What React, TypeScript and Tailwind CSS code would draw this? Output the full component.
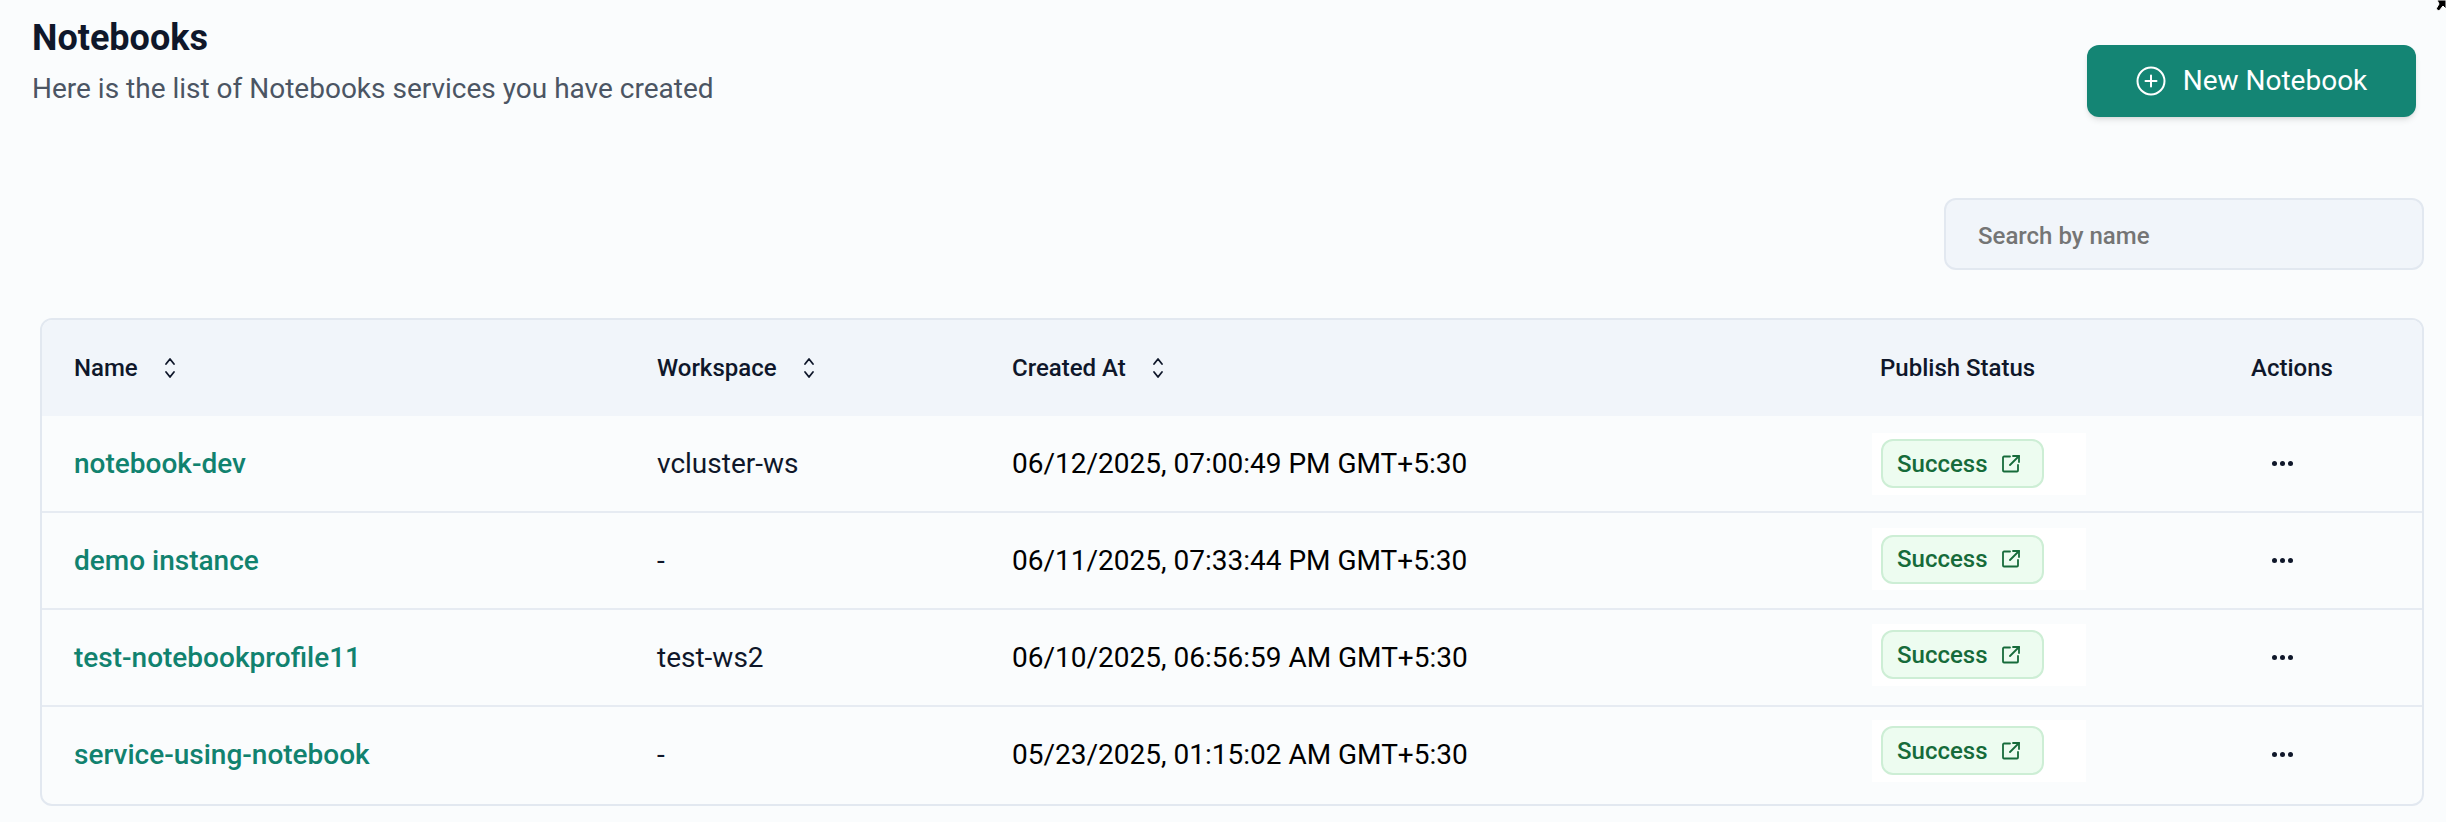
import React from 'react';

const rows = [
  { name: 'notebook-dev', workspace: 'vcluster-ws', createdAt: '06/12/2025, 07:00:49 PM GMT+5:30', badgeOffset: '' },
  { name: 'demo instance', workspace: '-', createdAt: '06/11/2025, 07:33:44 PM GMT+5:30', badgeOffset: '-mt-[3px]' },
  { name: 'test-notebookprofile11', workspace: 'test-ws2', createdAt: '06/10/2025, 06:56:59 AM GMT+5:30', badgeOffset: '-mt-[6px]' },
  { name: 'service-using-notebook', workspace: '-', createdAt: '05/23/2025, 01:15:02 AM GMT+5:30', badgeOffset: '-mt-[8px]' },
];

function SortIcon() {
  return (
    <svg className="w-[18px] h-[24px] text-[#0f172a]" viewBox="0 0 18 24" fill="none" stroke="currentColor" strokeWidth="1.8" strokeLinecap="round" strokeLinejoin="round">
      <path d="M5 8 9 3l4 5" />
      <path d="M5 16l4 5 4-5" />
    </svg>
  );
}

function ExternalIcon() {
  return (
    <svg className="w-[18px] h-[18px] text-[#166b3a]" viewBox="0 0 18 18" fill="none" stroke="currentColor" strokeWidth="1.8" strokeLinecap="round" strokeLinejoin="round">
      <path d="M8 1.5H2a1 1 0 0 0-1 1v13a1 1 0 0 0 1 1h13a1 1 0 0 0 1-1V10" />
      <path d="M11 1h6v6" />
      <path d="M17 1 8 10" />
    </svg>
  );
}

function HeaderCell({ title, sortable, width }: { title: string; sortable?: boolean; width: string }) {
  return (
    <div className={`${width} flex items-center gap-[23px] shrink-0`}>
      <span className="text-[24px] font-medium text-[#0f172a]">{title}</span>
      {sortable && <SortIcon />}
    </div>
  );
}

export default function App() {
  return (
    <div className="relative h-[822px] w-[2446px] overflow-hidden bg-[#fafcfd] font-['Roboto',sans-serif]">
      {/* mouse cursor caught at the corner of the capture */}
      <svg className="absolute right-0 top-0 w-[12px] h-[14px]" viewBox="0 0 12 14">
        <path d="M3 0h9v9L9 6 5 11 2 9l3-5z" fill="#000" stroke="#fff" strokeWidth="1" />
      </svg>

      <div className="flex items-start justify-between pl-[32px] pr-[30px] pt-[18px]">
        <div>
          <h1 className="text-[36px] leading-[40px] font-bold text-[#0f172a]">Notebooks</h1>
          <p className="mt-[14px] text-[28px] leading-[34px] text-[#4b5563]">Here is the list of Notebooks services you have created</p>
        </div>
        <button className="mt-[27px] flex h-[72px] w-[329px] items-center justify-center gap-[17px] rounded-[12px] bg-[#148574] text-[28px] font-normal text-white shadow-md">
          <svg className="w-[30px] h-[30px]" viewBox="0 0 30 30" fill="none" stroke="currentColor" strokeWidth="2" strokeLinecap="round">
            <circle cx="15" cy="15" r="13.5" />
            <path d="M15 9.5v11M9.5 15h11" />
          </svg>
          New Notebook
        </button>
      </div>

      <div className="mt-[81px] flex justify-end pr-[22px]">
        <div className="flex h-[72px] w-[480px] items-center rounded-[12px] border-2 border-[#e2e8f0] bg-[#f1f5fa] pl-[32px] pt-[3px] text-[24px] font-medium text-[#757575]">
          Search by name
        </div>
      </div>

      <div className="ml-[40px] mr-[22px] mt-[48px] overflow-hidden rounded-[12px] border-2 border-[#e2e8f0]">
        <div className="flex h-[96px] items-center bg-[#f1f5fa] pl-[32px]">
          <HeaderCell title="Name" sortable width="w-[583px]" />
          <HeaderCell title="Workspace" sortable width="w-[355px]" />
          <HeaderCell title="Created At" sortable width="w-[868px]" />
          <HeaderCell title="Publish Status" width="w-[371px]" />
          <HeaderCell title="Actions" width="w-[150px]" />
        </div>
        {rows.map((row, i) => (
          <div key={row.name} className={`flex h-[97px] items-center border-b-2 pl-[32px] ${i < rows.length - 1 ? 'border-[#e6ebf2]' : 'border-transparent'}`}>
            <div className="w-[583px] shrink-0 text-[28px] font-medium text-[#11826f]">{row.name}</div>
            <div className="w-[355px] shrink-0 text-[28px] text-[#0f172a]">{row.workspace}</div>
            <div className="w-[868px] shrink-0 text-[28px] text-black">{row.createdAt}</div>
            <div className="w-[371px] shrink-0">
              <div className={`-ml-[8px] flex h-[62px] w-[214px] items-center bg-white pl-[9px] ${row.badgeOffset}`}>
                <div className="flex h-[49px] w-[163px] items-center gap-[14px] rounded-[12px] border-2 border-[#cdeed5] bg-[#edfcf0] pl-[14px] text-[24px] font-medium text-[#166b3a]">
                  Success
                  <ExternalIcon />
                </div>
              </div>
            </div>
            <div className="flex w-[62px] shrink-0 justify-center gap-[3px]">
              <span className="h-[5px] w-[5px] rounded-full bg-[#0f172a]" />
              <span className="h-[5px] w-[5px] rounded-full bg-[#0f172a]" />
              <span className="h-[5px] w-[5px] rounded-full bg-[#0f172a]" />
            </div>
          </div>
        ))}
      </div>
    </div>
  );
}
